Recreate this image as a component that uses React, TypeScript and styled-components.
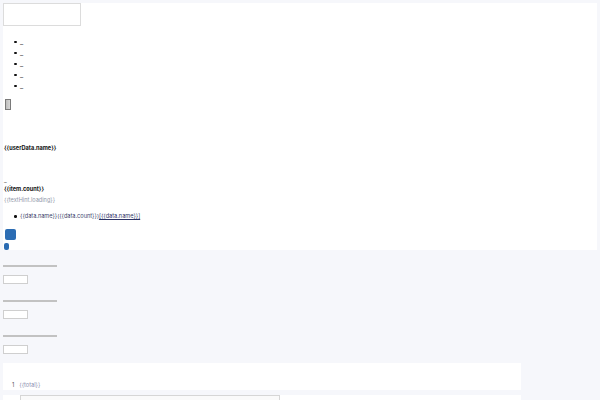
import styled, { createGlobalStyle } from 'styled-components';

const GlobalStyle = createGlobalStyle`
  html, body {
    margin: 0;
    padding: 0;
    background: #f6f7fb;
    font-family: Inter, "Liberation Sans", sans-serif;
    font-size: 5.6px;
    color: #222;
  }
`;

const Page = styled.div`
  padding: 3px 3px 0 3px;
  display: flex;
  flex-direction: column;
`;

const TopPanel = styled.section`
  background: #ffffff;
  height: 247px;
  display: flex;
  flex-direction: column;
  align-items: flex-start;
`;

const SearchBox = styled.div`
  width: 78px;
  height: 23px;
  box-sizing: border-box;
  border: 1px solid #dcdcdc;
  background: #fff;
`;

const BulletList = styled.ul<{ $top: number; $line: number }>`
  margin: ${p => p.$top}px 0 0 0;
  padding-left: 17px;
  list-style: none;
  line-height: ${p => p.$line}px;

  li::before {
    content: '';
    display: inline-block;
    width: 2.5px;
    height: 2.5px;
    border-radius: 50%;
    background: #111;
    margin: 0 3.5px 0 -6px;
    vertical-align: middle;
  }
`;

const DashItem = styled.li`
  height: 11px;
  font-size: 7px;
  color: #444;
`;

const DataItem = styled.li`
  font-size: 5.6px;
  color: #3a3f6a;
`;

const GrayButton = styled.button`
  margin: 8px 0 0 2px;
  width: 6px;
  height: 11px;
  padding: 0;
  border: 1px solid #7a7a7a;
  background: linear-gradient(90deg, #bdbdbd, #d6d6d6);
`;

const Title = styled.div<{ $top: number }>`
  margin: ${p => p.$top}px 0 0 1px;
  font-weight: 700;
  font-size: 5.6px;
  line-height: 9px;
  color: #111;
`;

const Underscore = styled.div`
  margin: 24px 0 0 1px;
  font-size: 6px;
  line-height: 6px;
  color: #555;
`;

const Hint = styled.div`
  margin: 2px 0 0 1px;
  font-size: 5.6px;
  line-height: 9px;
  color: #9097a8;
`;

const DataLink = styled.a`
  color: #2e3466;
  text-decoration: underline;
`;

const BlueButton = styled.button<{ $w: number; $h: number; $left: number; $top: number }>`
  margin: ${p => p.$top}px 0 0 ${p => p.$left}px;
  width: ${p => p.$w}px;
  height: ${p => p.$h}px;
  padding: 0;
  border: none;
  border-radius: 2px;
  background: #2b6cb3;
`;

const FieldGroup = styled.div`
  margin-top: 15px;
  display: flex;
  flex-direction: column;
`;

const FieldBlock = styled.div`
  display: flex;
  flex-direction: column;
  gap: 8px;
  margin-bottom: 16px;

  &:last-child {
    margin-bottom: 0;
  }
`;

const Rule = styled.div`
  width: 54px;
  height: 2px;
  background: #c2c2c2;
`;

const SmallField = styled.div`
  width: 25px;
  height: 9px;
  box-sizing: border-box;
  border: 1px solid #cfcfcf;
  background: #fff;
`;

const TotalPanel = styled.section`
  margin-top: 9px;
  width: 518px;
  height: 27px;
  background: #fff;
  display: flex;
  align-items: flex-end;
  padding: 0 0 2px 9px;
  box-sizing: border-box;
  gap: 5px;
  font-size: 5.6px;
  color: #777;
`;

const TotalNum = styled.span`
  color: #555;
`;

const TotalText = styled.span`
  color: #8a8fb0;
`;

const TablePanel = styled.section`
  margin-top: 5px;
  width: 518px;
  height: 20px;
  background: #fff;
  padding-left: 17px;
  box-sizing: border-box;
`;

const TableBox = styled.div`
  width: 260px;
  height: 20px;
  box-sizing: border-box;
  border: 1px solid #d6d6d6;
  background: #fafafa;
`;

export default function App() {
  return (
    <>
      <GlobalStyle />
      <Page>
        <TopPanel>
          <SearchBox />
          <BulletList $top={10} $line={11}>
            {[0, 1, 2, 3, 4].map(i => (
              <DashItem key={i}>_</DashItem>
            ))}
          </BulletList>
          <GrayButton />
          <Title $top={34}>{'{{userData.name}}'}</Title>
          <Underscore>_</Underscore>
          <Title $top={2}>{'{{item.count}}'}</Title>
          <Hint>{'{{textHint.loading}}'}</Hint>
          <BulletList $top={7} $line={9}>
            <DataItem>
              {'{{data.name}}({{data.count}})'}
              <DataLink>{'[{{data.name}}]'}</DataLink>
            </DataItem>
          </BulletList>
          <BlueButton $w={11} $h={11} $left={2} $top={8} />
          <BlueButton $w={5} $h={7} $left={1} $top={3} />
        </TopPanel>
        <FieldGroup>
          {[0, 1, 2].map(i => (
            <FieldBlock key={i}>
              <Rule />
              <SmallField />
            </FieldBlock>
          ))}
        </FieldGroup>
        <TotalPanel>
          <TotalNum>1</TotalNum>
          <TotalText>{'{{total}}'}</TotalText>
        </TotalPanel>
        <TablePanel>
          <TableBox />
        </TablePanel>
      </Page>
    </>
  );
}
